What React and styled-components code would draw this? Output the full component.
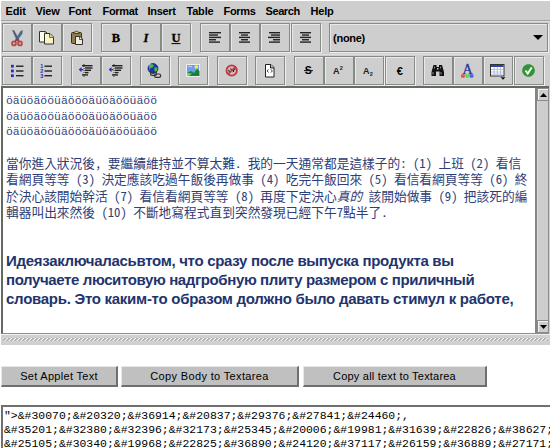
import React from "react";
import styled, { createGlobalStyle } from "styled-components";

const GlobalStyle = createGlobalStyle`
  * { box-sizing: border-box; }
  body { margin: 0; background: #fff; overflow: hidden; }
`;

const Page = styled.div`
  width: 550px;
  height: 448px;
  padding: 1px 0 0 1px;
  overflow: hidden;
  background: #fff;
  font-family: "Liberation Sans", Arial, sans-serif;
`;
const Applet = styled.section`
  width: 549px;
  height: 344px;
  background: #cecece;
  display: flex;
  flex-direction: column;
`;
const MenuBar = styled.nav`
  display: grid;
  grid-template-columns: 30px 33px 34px 45px 39px 37px 42px 45px 1fr;
  height: 20px;
  padding-left: 4.5px;
  border-bottom: 1px solid #a2a2a2;
  flex: none;
`;
const MenuItem = styled.span`
  font-size: 11px;
  font-weight: bold;
  line-height: 20px;
  letter-spacing: ${(p) => p.$track || 0}px;
  color: #000;
  white-space: nowrap;
`;
const Toolbar = styled.div`
  display: flex;
  gap: 8.6px;
  height: ${(p) => p.$height}px;
  padding: 1px 0 0 1px;
  flex: none;
  border-top: 1px solid #dedede;
`;
const Group = styled.div`
  display: flex;
  gap: 0.2px;
`;
const ToolButton = styled.button`
  width: 30px;
  height: 29px;
  padding: 0;
  border: 1px solid #868b86;
  background: #cecece;
  box-shadow: inset 1px 1px 0 #e9e9e9, 1px 1px 0 #f0f0f0;
  svg { display: block; margin: -1px; }
`;
const Combo = styled.div`
  width: 219px;
  height: 29px;
  display: flex;
  align-items: center;
  justify-content: space-between;
  padding: 0 4px 0 3px;
  border: 1px solid #868b86;
  box-shadow: inset 1px 1px 0 #e9e9e9, 1px 1px 0 #f0f0f0;
  font-size: 11px;
  font-weight: bold;
  letter-spacing: -0.3px;
`;
const EditorFrame = styled.div`
  display: flex;
  height: 248px;
  width: 548px;
  flex: none;
  border-top: 2px solid #626a62;
  border-left: 2px solid #626a62;
  border-bottom: 1px solid #8e8e8e;
  background: #fff;
`;
const Document = styled.div`
  flex: 1;
  padding: 5px 0 0 3px;
  color: #34437c;
  overflow: hidden;
`;
const MonoLine = styled.div`
  font: 11.45px/15.5px "Liberation Mono", monospace;
  white-space: nowrap;
`;
const HanBlock = styled.div`
  margin-top: 15.5px;
  font: 12.72px/16.35px "Noto Sans CJK TC", sans-serif;
  font-feature-settings: "hwid";
  color: #2e3e77;
`;
const HanLine = styled.div`
  white-space: pre;
  height: 16.35px;
`;
const CyrillicBlock = styled.div`
  margin-top: 32px;
  font-size: 15px;
  font-weight: bold;
  line-height: 18.9px;
  color: #23346d;
`;
const CyrillicLine = styled.div`
  white-space: pre;
  letter-spacing: ${(p) => p.$track}px;
`;
const Scrollbar = styled.div`
  width: 14px;
  display: flex;
  flex-direction: column;
  border-left: 2px solid #858585;
  background: #cdcdcd;
`;
const ScrollArrow = styled.div`
  height: 13px;
  display: grid;
  place-items: center;
  border: 1px solid #8c8c8c;
  box-shadow: inset 1px 1px 0 #f3f3f3;
`;
const ScrollThumb = styled.div`
  flex: 1;
  border-right: 1px solid #8c8c8c;
  box-shadow: inset 1px 0 0 #dcdcdc;
`;
const Splitter = styled.div`
  flex: 1;
  padding: 3px 2px 4px;
  border-top: 1px solid #f2f2f2;
  background: repeating-linear-gradient(135deg, #f3f3f3 0 1px, #b2b2b2 1px 2.2px, #d4d4d4 2.2px 2.83px) content-box, #d0d0d0;
`;
const FormRow = styled.div`
  display: flex;
  margin-top: 21px;
  height: 21px;
`;
const FormButton = styled.button`
  width: ${(p) => p.$width}px;
  margin-right: ${(p) => p.$gap || 0}px;
  height: 21px;
  padding: 0;
  border: solid;
  border-width: 1px 2px 2px 1px;
  border-color: #e8e8e8 #6e7070 #6e7070 #e8e8e8;
  background: #c0c0c0;
  color: #000;
  font: 11px/17px "Liberation Sans", Arial, sans-serif;
  letter-spacing: ${(p) => p.$track}px;
  white-space: nowrap;
`;
const Source = styled.div`
  margin-top: 18px;
  height: 60px;
  width: 560px;
  padding: 2px 0 0 1px;
  border-top: 2px solid #707070;
  border-left: 2px solid #707070;
  font: 11.45px/13.8px "Liberation Mono", monospace;
  color: #000;
  white-space: pre;
`;

const Icon = ({ children }) => (
  <svg width="30" height="29" viewBox="0 0 30 29">{children}</svg>
);
const Lines = ({ rows, color = "#222" }) =>
  rows.map(([x, y, w], i) => <rect key={i} x={x} y={y} width={w} height="1.4" fill={color} />);

const Serif = ({ children, italic }) => (
  <text x="15" y="19" textAnchor="middle" fontFamily="Liberation Serif" fontWeight="bold"
    fontStyle={italic ? "italic" : "normal"} fontSize="12.5" fill="#000" stroke="#000" strokeWidth=".3">{children}</text>
);

const Cut = () => (
  <Icon>
    <path d="M10.5 7.5L12 7.5L17 16.5L15 17.5Z" fill="#4d617e" stroke="#34455e" strokeWidth=".4" />
    <path d="M20.5 7.5L18.5 8.5L13.5 16.5L15 17.5L20 11Z" fill="#526e92" stroke="#34455e" strokeWidth=".4" />
    <circle cx="12" cy="20.4" r="2" fill="#d9a9a9" stroke="#b54b4b" strokeWidth="1.700" />
    <circle cx="18" cy="20.4" r="2" fill="#d9a9a9" stroke="#b54b4b" strokeWidth="1.700" />
    <path d="M13 18.5L15 16.5L17 18.5" fill="none" stroke="#a03a3a" strokeWidth="1.6" />
  </Icon>
);
const Copy = () => (
  <Icon>
    <path d="M7.5 8.5h6l2.5 2.5v8h-8.500z" fill="#fcfcec" stroke="#333" />
    <path d="M13 8.500v3h3" fill="none" stroke="#333" strokeWidth=".8" />
    <path d="M12.500 10.500h5.500l3.500 3.500v7h-9z" fill="#f8f2c4" stroke="#333" />
    <path d="M17.500 11v3.500h4" fill="#e0d588" stroke="#54502c" strokeWidth=".8" />
  </Icon>
);
const Paste = () => (
  <Icon>
    <rect x="9.500" y="9.500" width="10" height="11" rx="1" fill="#8c7d52" stroke="#322d20" />
    <path d="M12 10.500v-1.500h1.500l1-1.200l1 1.200h1.500v1.500z" fill="#ded08b" stroke="#322d20" strokeWidth=".8" />
    <path d="M13.500 13.500h4.500l2.500 2.500v5.500h-7z" fill="#f1eed4" stroke="#333" />
    <path d="M17.500 14v2.500h3" fill="none" stroke="#333" strokeWidth=".8" />
  </Icon>
);
const Align = ({ rows }) => (
  <Icon><Lines rows={rows.map(([x, w], i) => [x, 9 + i * 2.35, w])} /></Icon>
);
const Bullets = () => (
  <Icon>
    {[8.8, 13.6, 18.3].map((y) => <rect key={y} x="9" y={y} width="2.800" height="2.800" fill="#2430b8" />)}
    <Lines rows={[[14, 9.500, 7.500], [14, 14.300, 7.500], [14, 19, 7.500]]} />
  </Icon>
);
const Numbers = () => (
  <Icon>
    {[1, 2, 3].map((n) => (
      <text key={n} x="8.200" y={7.500 + n * 4.700} fontFamily="Liberation Sans" fontSize="5.500" fontWeight="bold" fill="#2430b8">{n}</text>
    ))}
    <Lines rows={[[12.500, 9.500, 7.500], [12.500, 14.300, 7.500], [12.500, 19, 7.500]]} />
  </Icon>
);
const Indent = () => (
  <Icon>
    <path d="M7.700 13.500l2.800-2.500v2h1.700v1.200h-1.700v2z" fill="#2b31a5" />
    <path d="M13 8v13" stroke="#333" strokeDasharray="1 1" />
    <Lines rows={[[11, 9, 10.500], [14, 11.300, 7.500], [14, 13.600, 6], [14, 15.900, 3.500], [11, 18.200, 6]]} />
  </Icon>
);
const Link = () => (
  <Icon>
    <circle cx="13" cy="12.500" r="5" fill="#222fb0" stroke="#17245c" strokeWidth=".7" />
    <path d="M9 9.500l3-1.500l2 1.500l-1.500 2l-2 .5l-1 2.500zM14.500 11l3 1l-.5 3l-2.500 1z" fill="#45c33e" />
    <path d="M9 9l2-1.300" stroke="#7fd4f0" />
    <rect x="10.500" y="16" width="6" height="3.400" rx="1.700" fill="none" stroke="#333" strokeWidth="1.200" />
    <rect x="14.500" y="18" width="6.200" height="3.400" rx="1.700" fill="none" stroke="#333" strokeWidth="1.200" />
  </Icon>
);
const Picture = () => (
  <Icon>
    <rect x="8.500" y="8.500" width="13" height="12" fill="#6f9fe8" stroke="#eee" />
    <path d="M9 17l4-2l3 2l3-4l2.500 2v5h-12.500z" fill="#16813a" />
    <path d="M9 17l5 .5l-3 2.500h-2z" fill="#7dd26b" />
    <circle cx="18.300" cy="11" r="1.800" fill="#f8ec55" />
    <path d="M10 11q2-2 4 0" stroke="#bfdcff" fill="none" />
  </Icon>
);
const NoFlash = () => (
  <Icon>
    <circle cx="14.700" cy="14.500" r="5.200" fill="#cbbcbc" stroke="#c33840" strokeWidth="1.800" />
    <path d="M11.500 14l1.500 2.500M13.500 12.500l2 2.500M16.500 13.500v2.500M17.800 12.500v1.500" stroke="#222" strokeWidth="1.100" />
    <path d="M11 18.200l7.400-7.400" stroke="#c33840" strokeWidth="1.600" />
  </Icon>
);
const CodePage = () => (
  <Icon>
    <path d="M10.500 8.500h5.500l3 3v9.500h-8.500z" fill="#fff" stroke="#222" />
    <path d="M15.500 8.500v3.500h3.500" fill="#bbb" stroke="#222" />
    <path d="M13.500 13.500l-1.300 1.500l1.300 1.500M16 13.500l1.300 1.500l-1.300 1.500" fill="none" stroke="#222" strokeWidth=".9" />
  </Icon>
);
const Strike = () => (
  <Icon>
    <text x="14.300" y="18.300" textAnchor="middle" fontFamily="Liberation Sans" fontSize="10.500" fontWeight="bold">S</text>
    <path d="M10 14.600h9" stroke="#111" />
  </Icon>
);
const Script = ({ sub }) => (
  <Icon>
    <text x="9" y="17.500" fontFamily="Liberation Sans" fontSize="9" fontWeight="bold" fill="#222">A</text>
    <text x="15.700" y={sub ? 19.500 : 13.500} fontFamily="Liberation Sans" fontSize="5.500" fontWeight="bold" fill="#222">2</text>
  </Icon>
);
const Euro = () => (
  <Icon><text x="14.700" y="18.500" textAnchor="middle" fontFamily="Liberation Sans" fontSize="11" fontWeight="bold">€</text></Icon>
);
const Find = () => (
  <Icon>
    <path d="M10.500 9h3v2h2.500v-2h3l2 7v4h-4.500v-4.500h-3.500v4.500h-4.500v-4z" fill="#111" />
    <path d="M10 16v2.500M18 16v2.500M11.500 10.500v2M17.500 10.500v2" stroke="#aaa" strokeWidth=".8" />
    <rect x="14" y="12" width="1.500" height="1.500" fill="#ccc" />
  </Icon>
);
const Colour = () => (
  <Icon>
    <text x="14.500" y="17.500" textAnchor="middle" fontFamily="Liberation Serif" fontSize="14" fill="#31369a" stroke="#31369a" strokeWidth=".35">A</text>
    <rect x="8" y="18.200" width="3.800" height="3.500" rx="1" fill="#ed5151" />
    <rect x="12.300" y="18.200" width="3.800" height="3.500" rx="1" fill="#51df56" />
    <rect x="16.600" y="18.200" width="3.800" height="3.500" rx="1" fill="#5061e7" />
  </Icon>
);
const TableMenu = () => (
  <Icon>
    <rect x="7.500" y="8.500" width="13.500" height="11.500" fill="#fff" stroke="#333" />
    <rect x="8" y="9" width="12.500" height="2" fill="#2548ad" />
    <path d="M8 13.500h12.500M8 16h12.500M8 18.200h12.500M11.200 11v9M14.300 11v9M17.500 11v9" stroke="#9dadd0" strokeWidth=".7" />
    <path d="M17.500 21.200h5l-2.500 2.500z" fill="#111" />
  </Icon>
);
const Check = () => (
  <Icon>
    <circle cx="14.500" cy="14.500" r="6" fill="#2d9731" stroke="#258029" strokeWidth=".6" />
    <path d="M11.500 14.500l2.200 3l4-6" fill="none" stroke="#fff" strokeWidth="1.900" />
  </Icon>
);

const topGroups = [
  [<Cut />, <Copy />, <Paste />],
  [<Serif key="b">B</Serif>, <Serif key="i" italic>I</Serif>, <><Serif>U</Serif><path d="M10.500 20.600h9" stroke="#000" /></>].map((c, i) => <Icon key={i}>{c}</Icon>),
  [
    <Align rows={[[9, 12], [9, 9], [9, 12], [9, 7], [9, 11]]} />,
    <Align rows={[[9, 11], [11, 7], [9, 11], [11, 7], [9, 11]]} />,
    <Align rows={[[9, 11], [11, 9], [8, 12], [13, 7], [9, 11]]} />,
    <Align rows={[[9, 11], [11, 7], [9, 11], [11, 7], [9, 11]]} />,
  ],
];
const bottomGroups = [
  [<Bullets />, <Numbers />],
  [<Indent />, <Indent />],
  [<Link />],
  [<Picture />],
  [<NoFlash />],
  [<CodePage />],
  [<Strike />, <Script />, <Script sub />, <Euro />],
  [<Find />, <Colour />, <TableMenu />, <Check />],
];
const Groups = ({ groups }) =>
  groups.map((icons, g) => (
    <Group key={g}>{icons.map((icon, i) => <ToolButton key={i}>{icon}</ToolButton>)}</Group>
  ));

const menus = [["Edit", -0.1], ["View", -0.2], ["Font", -0.3], ["Format", -0.3], ["Insert", -0.3], ["Table", -0.2], ["Forms", -0.3], ["Search", -0.4], ["Help", -0.2]];
const umlauts = "öäüöäööüäöööäüöäööüäöö";
const source = [
  [30070, 20320, 36914, 20837, 29376, 27841, 24460],
  [35201, 32380, 32396, 32173, 25345, 20006, 19981, 31639, 22826, 38627],
  [25105, 30340, 19968, 22825, 36890, 24120, 37117, 26159, 36889, 27171],
].map((row) => row.map((n) => `&#${n};`).join(""));

export default function App() {
  return (
    <Page>
      <GlobalStyle />
      <Applet>
        <MenuBar>
          {menus.map(([name, track]) => <MenuItem key={name} $track={track}>{name}</MenuItem>)}
        </MenuBar>
        <Toolbar $height={33}>
          <Groups groups={topGroups} />
          <Combo>
            (none)
            <svg width="10" height="5" viewBox="0 0 10 5"><path d="M0 0h10L5 5z" /></svg>
          </Combo>
        </Toolbar>
        <Toolbar $height={32}>
          <Groups groups={bottomGroups} />
        </Toolbar>
        <EditorFrame>
          <Document>
            {[0, 1, 2].map((i) => <MonoLine key={i}>{umlauts}</MonoLine>)}
            <HanBlock>
              <HanLine>當你進入狀況後, 要繼續維持並不算太難. 我的一天通常都是這樣子的: (1) 上班 (2) 看信</HanLine>
              <HanLine>看網頁等等 (3) 決定應該吃過午飯後再做事 (4) 吃完午飯回來 (5) 看信看網頁等等 (6) 終</HanLine>
              <HanLine>於決心該開始幹活 (7) 看信看網頁等等 (8) 再度下定決心<i>真的</i> 該開始做事 (9) 把該死的編</HanLine>
              <HanLine>輯器叫出來然後 (10) 不斷地寫程式直到突然發現已經下午7點半了.</HanLine>
            </HanBlock>
            <CyrillicBlock>
              <CyrillicLine $track={-0.3}>Идеязаключаласьвтом, что сразу после выпуска продукта вы</CyrillicLine>
              <CyrillicLine $track={-0.38}>получаете люситовую надгробную плиту размером с приличный</CyrillicLine>
              <CyrillicLine $track={-0.27}>словарь. Это каким-то образом должно было давать стимул к работе,</CyrillicLine>
            </CyrillicBlock>
          </Document>
          <Scrollbar>
            <ScrollArrow><svg width="7" height="4" viewBox="0 0 7 4"><path d="M3.500 0L7 4H0z" /></svg></ScrollArrow>
            <ScrollThumb />
            <ScrollArrow><svg width="7" height="4" viewBox="0 0 7 4"><path d="M0 0h7L3.500 4z" /></svg></ScrollArrow>
          </Scrollbar>
        </EditorFrame>
        <Splitter />
      </Applet>
      <FormRow>
        <FormButton $width={117} $gap={3} $track={0.3}>Set Applet Text</FormButton>
        <FormButton $width={178} $gap={4} $track={0.35}>Copy Body to Textarea</FormButton>
        <FormButton $width={184} $track={0.2}>Copy all text to Textarea</FormButton>
      </FormRow>
      <Source>
        <div>{'">' + source[0]},</div>
        <div>{source[1]}</div>
        <div>{source[2]}</div>
      </Source>
    </Page>
  );
}
